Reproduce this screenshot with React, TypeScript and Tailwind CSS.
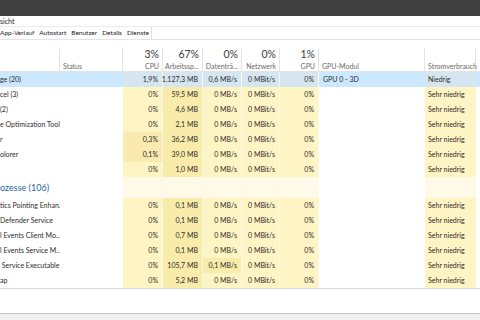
import React from "react";

type Row = {
  name: string;
  cpu: string;
  mem: string;
  disk: string;
  net: string;
  gpu: string;
  gpuMod: string;
  power: string;
  cpuDark?: boolean;
  diskDark?: boolean;
  selected?: boolean;
};

const topRows: Row[] = [
  { name: "ge (20)", cpu: "1,9%", mem: "1.127,3 MB", disk: "0,6 MB/s", net: "0 MBit/s", gpu: "0%", gpuMod: "GPU 0 - 3D", power: "Niedrig", selected: true },
  { name: "cel (3)", cpu: "0%", mem: "59,5 MB", disk: "0 MB/s", net: "0 MBit/s", gpu: "0%", gpuMod: "", power: "Sehr niedrig" },
  { name: "(2)", cpu: "0%", mem: "4,6 MB", disk: "0 MB/s", net: "0 MBit/s", gpu: "0%", gpuMod: "", power: "Sehr niedrig" },
  { name: "e Optimization Tool", cpu: "0%", mem: "2,1 MB", disk: "0 MB/s", net: "0 MBit/s", gpu: "0%", gpuMod: "", power: "Sehr niedrig" },
  { name: "r", cpu: "0,3%", mem: "36,2 MB", disk: "0 MB/s", net: "0 MBit/s", gpu: "0%", gpuMod: "", power: "Sehr niedrig", cpuDark: true },
  { name: "olorer", cpu: "0,1%", mem: "39,0 MB", disk: "0 MB/s", net: "0 MBit/s", gpu: "0%", gpuMod: "", power: "Sehr niedrig", cpuDark: true },
  { name: "", cpu: "0%", mem: "1,0 MB", disk: "0 MB/s", net: "0 MBit/s", gpu: "0%", gpuMod: "", power: "Sehr niedrig" },
];

const bottomRows: Row[] = [
  { name: "tics Pointing Enhan...", cpu: "0%", mem: "0,1 MB", disk: "0 MB/s", net: "0 MBit/s", gpu: "0%", gpuMod: "", power: "Sehr niedrig" },
  { name: "Defender Service", cpu: "0%", mem: "0,1 MB", disk: "0 MB/s", net: "0 MBit/s", gpu: "0%", gpuMod: "", power: "Sehr niedrig" },
  { name: "l Events Client Mo...", cpu: "0%", mem: "0,7 MB", disk: "0 MB/s", net: "0 MBit/s", gpu: "0%", gpuMod: "", power: "Sehr niedrig" },
  { name: "l Events Service M...", cpu: "0%", mem: "0,1 MB", disk: "0 MB/s", net: "0 MBit/s", gpu: "0%", gpuMod: "", power: "Sehr niedrig" },
  { name: " Service Executable", cpu: "0%", mem: "105,7 MB", disk: "0,1 MB/s", net: "0 MBit/s", gpu: "0%", gpuMod: "", power: "Sehr niedrig", diskDark: true },
  { name: "ap", cpu: "0%", mem: "5,2 MB", disk: "0 MB/s", net: "0 MBit/s", gpu: "0%", gpuMod: "", power: "Sehr niedrig" },
];

const GRID = "grid grid-cols-[60px_63px_40px_40px_39px_38px_39px_106px_51px_4px]";

function DataRow({ r }: { r: Row }) {
  const sel = r.selected;
  const white = sel ? "bg-[#cce8ff]" : "bg-white";
  const light = sel ? "bg-[#d6e6f1]" : "bg-[#fff4c4]";
  const cpuBg = sel ? "bg-[#d6e6f1]" : r.cpuDark ? "bg-[#f9ebb0]" : "bg-[#fff4c4]";
  const memBg = sel ? "bg-[#d6e6f1]" : "bg-[#f9eba9]";
  const diskBg = sel ? "bg-[#d6e6f1]" : r.diskDark ? "bg-[#f9eba9]" : "bg-[#fff4c4]";
  const num = "flex items-center justify-end pr-[4px] border-r border-[#fbf7ea] whitespace-nowrap";
  return (
    <div className={`${GRID} h-[15px] text-[7px] text-[#2b2b2b] leading-none`}>
      <div className={`${white} flex items-center whitespace-pre`}>{r.name}</div>
      <div className={`${white}`}></div>
      <div className={`${cpuBg} ${num}`}>{r.cpu}</div>
      <div className={`${memBg} ${num}`}>{r.mem}</div>
      <div className={`${diskBg} ${num}`}>{r.disk}</div>
      <div className={`${light} ${num}`}>{r.net}</div>
      <div className={`${light} ${num}`}>{r.gpu}</div>
      <div className={`${white} flex items-center pl-[4px] whitespace-nowrap`}>{r.gpuMod}</div>
      <div className={`${light} flex items-center pl-[3px] whitespace-nowrap`}>{r.power}</div>
      <div className={white}></div>
    </div>
  );
}

function HeadCell({ pct, label, align = "right", border = true }: { pct?: string; label: string; align?: "right" | "left"; border?: boolean }) {
  return (
    <div className={`flex flex-col justify-end pb-[1px] whitespace-nowrap ${border ? "border-r border-[#e3e3e3]" : ""} mt-[8px] ${align === "right" ? "items-end pr-[3px]" : "items-start pl-[3px]"}`}>
      {pct !== undefined && <div className="text-[10.5px] leading-[13px] text-[#3a3a3a]">{pct}</div>}
      <div className="text-[7px] leading-[10px] text-[#6b6b6b]">{label}</div>
    </div>
  );
}

export default function App() {
  return (
    <div className="w-[480px] h-[320px] bg-white overflow-hidden flex flex-col font-['Lato','Open_Sans',sans-serif]">
      <div className="h-[16px] bg-[#404040] shrink-0" />
      <div className="h-[11px] border-b border-[#ececec] flex items-center text-[7px] text-[#222] shrink-0">sicht</div>
      <div className="h-[13px] border-b border-[#e3e3e3] flex shrink-0">
        <div className="flex items-center gap-[5px] text-[6.5px] text-[#222] pr-[2px] border-r border-[#dcdcdc] whitespace-nowrap">
          <span>App-Verlauf</span>
          <span>Autostart</span>
          <span>Benutzer</span>
          <span>Details</span>
          <span>Dienste</span>
        </div>
      </div>
      <div className={`${GRID} h-[32px] border-b border-[#e3e3e3] shrink-0`}>
        <div className="border-r border-[#e3e3e3] mt-[8px]" />
        <HeadCell label="Status" align="left" />
        <HeadCell pct="3%" label="CPU" />
        <HeadCell pct="67%" label="Arbeitssp..." />
        <HeadCell pct="0%" label="Datenträ..." />
        <HeadCell pct="0%" label="Netzwerk" />
        <HeadCell pct="1%" label="GPU" />
        <HeadCell label="GPU-Modul" align="left" />
        <HeadCell label="Stromverbrauch" align="left" />
        <div />
      </div>
      {topRows.map((r, i) => (
        <DataRow key={"t" + i} r={r} />
      ))}
      <div className={`${GRID} h-[21px]`}>
        <div className="col-span-2 bg-white flex items-center text-[9px] text-[#1f5fae] whitespace-nowrap">ozesse (106)</div>
        <div className="bg-[#fffae8] border-r border-[#fbf7ea]" />
        <div className="bg-[#fffae8] border-r border-[#fbf7ea]" />
        <div className="bg-[#fffae8] border-r border-[#fbf7ea]" />
        <div className="bg-[#fffae8] border-r border-[#fbf7ea]" />
        <div className="bg-[#fffae8]" />
        <div className="bg-white" />
        <div className="bg-[#fffae8]" />
        <div className="bg-white" />
      </div>
      {bottomRows.map((r, i) => (
        <DataRow key={"b" + i} r={r} />
      ))}
      <div className="h-[26px] border-t border-[#d9d9d9] border-b border-b-[#c4c4c4] bg-white shrink-0" />
      <div className="flex-1 bg-[#f0f0f0]" />
    </div>
  );
}
